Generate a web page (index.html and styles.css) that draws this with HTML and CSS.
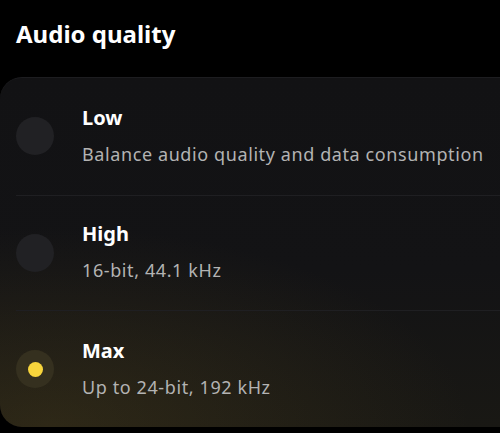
FILE: index.html
```html
<!DOCTYPE html>
<html lang="en">
<head>
<meta charset="utf-8">
<link rel="stylesheet" href="styles.css">
</head>
<body>
<div class="page">
  <h1 class="title">Audio quality</h1>
  <div class="card">
    <div class="option">
      <span class="radio"></span>
      <div class="text">
        <div class="name">Low</div>
        <div class="desc">Balance audio quality and data consumption</div>
      </div>
    </div>
    <div class="option">
      <span class="radio"></span>
      <div class="text">
        <div class="name">High</div>
        <div class="desc">16-bit, 44.1 kHz</div>
      </div>
    </div>
    <div class="option selected">
      <span class="radio"><span class="dot"></span></span>
      <div class="text">
        <div class="name">Max</div>
        <div class="desc">Up to 24-bit, 192 kHz</div>
      </div>
    </div>
  </div>
</div>
</body>
</html>
```

FILE: styles.css
```css
html, body {
  margin: 0;
  padding: 0;
  background: #000;
  overflow: hidden;
}
body {
  width: 500px;
  height: 433px;
  font-family: "Noto Sans", Lato, sans-serif;
  color: #fff;
}
.page {
  display: flex;
  flex-direction: column;
}
.title {
  margin: 0;
  padding: 18px 0 0 16px;
  height: 77px;
  box-sizing: border-box;
  font-size: 24px;
  font-weight: 700;
  line-height: 32px;
}
.card {
  width: 500px;
  height: 350px;
  border-radius: 22px 0 0 22px;
  border-top: 1px solid #1d1d20;
  box-sizing: border-box;
  background:
    radial-gradient(ellipse 420px 200px at 10% 100%, rgba(95, 78, 30, 0.3), rgba(60, 50, 20, 0) 100%),
    linear-gradient(180deg, #121214 0%, #131315 55%, #191814 100%);
  display: flex;
  flex-direction: column;
}
.option {
  display: flex;
  align-items: center;
  height: 116px;
  margin-left: 16px;
  border-bottom: 1px solid #1f1f22;
  box-sizing: border-box;
}
.option:first-child {
  height: 118px;
}
.option:last-child {
  border-bottom: none;
}
.radio {
  width: 38px;
  height: 38px;
  border-radius: 50%;
  background: #212124;
  flex: none;
  display: flex;
  align-items: center;
  justify-content: center;
}
.selected .radio {
  background: #35301f;
}
.dot {
  width: 15px;
  height: 15px;
  border-radius: 50%;
  background: #f8d53c;
}
.text {
  margin-left: 28px;
  display: flex;
  flex-direction: column;
  gap: 11px;
  margin-top: -2px;
}
.name {
  font-size: 20px;
  font-weight: 700;
  line-height: 26px;
}
.desc {
  font-size: 18px;
  line-height: 24px;
  letter-spacing: 0.6px;
  color: #b3b3b3;
}
```
